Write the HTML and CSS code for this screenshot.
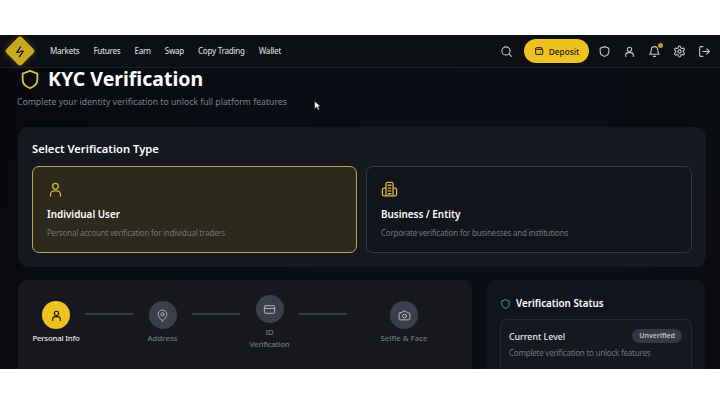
FILE: index.html
```html
<!DOCTYPE html>
<html lang="en">
<head>
<meta charset="utf-8">
<title>KYC Verification</title>
<link rel="stylesheet" href="styles.css">
</head>
<body>
<div class="frame">
  <header class="nav">
    <div class="logo"><svg class="logo-bolt" viewBox="0 0 24 24" width="13" height="13"><path d="M13 3 6 13h5M11 21l7-10h-5" fill="none" stroke="#1a1505" stroke-width="2.4" stroke-linejoin="round" stroke-linecap="round"/></svg></div>
    <nav class="links">
      <span>Markets</span><span>Futures</span><span>Earn</span><span>Swap</span><span>Copy Trading</span><span>Wallet</span>
    </nav>
    <div class="tools">
      <svg class="ic search" viewBox="0 0 24 24"><circle cx="11" cy="11" r="7.5"/><path d="m21 21-4.5-4.5"/></svg>
      <button class="deposit"><svg viewBox="0 0 24 24"><path d="M19 7V5a1 1 0 0 0-1-1H6a2 2 0 0 0 0 4h14a1 1 0 0 1 1 1v10a1 1 0 0 1-1 1H6a2 2 0 0 1-2-2V6"/><path d="M16 14h.01"/></svg>Deposit</button>
      <svg class="ic" viewBox="0 0 24 24"><path d="M12 3 4 6v6c0 5 3.500 7.800 8 9 4.500-1.200 8-4 8-9V6z"/></svg>
      <svg class="ic" viewBox="0 0 24 24"><circle cx="12" cy="8" r="4"/><path d="M5 21v-2a5 5 0 0 1 5-5h4a5 5 0 0 1 5 5v2"/></svg>
      <div class="bell"><svg class="ic" viewBox="0 0 24 24"><path d="M6 9a6 6 0 0 1 12 0c0 6 2.500 8 2.500 8h-17S6 15 6 9M10 21h4"/></svg><i class="dot"></i></div>
      <svg class="ic" viewBox="0 0 24 24"><path d="M12.220 2h-.44a2 2 0 0 0-2 2v.18a2 2 0 0 1-1 1.730l-.43.25a2 2 0 0 1-2 0l-.15-.08a2 2 0 0 0-2.730.73l-.22.38a2 2 0 0 0 .73 2.730l.15.1a2 2 0 0 1 1 1.720v.51a2 2 0 0 1-1 1.740l-.15.09a2 2 0 0 0-.73 2.730l.22.38a2 2 0 0 0 2.730.73l.15-.08a2 2 0 0 1 2 0l.43.25a2 2 0 0 1 1 1.730V20a2 2 0 0 0 2 2h.44a2 2 0 0 0 2-2v-.18a2 2 0 0 1 1-1.730l.43-.25a2 2 0 0 1 2 0l.15.08a2 2 0 0 0 2.730-.73l.22-.39a2 2 0 0 0-.73-2.730l-.15-.08a2 2 0 0 1-1-1.740v-.5a2 2 0 0 1 1-1.740l.15-.09a2 2 0 0 0 .73-2.730l-.22-.38a2 2 0 0 0-2.730-.73l-.15.08a2 2 0 0 1-2 0l-.43-.25a2 2 0 0 1-1-1.730V4a2 2 0 0 0-2-2z"/><circle cx="12" cy="12" r="3"/></svg>
      <svg class="ic" viewBox="0 0 24 24"><path d="M9 21H5a2 2 0 0 1-2-2V5a2 2 0 0 1 2-2h4M16 17l5-5-5-5M21 12H9"/></svg>
    </div>
  </header>

  <main class="page">
    <div class="title-row">
      <svg class="title-shield" viewBox="0 0 24 24"><path d="M12 2.500 4 5.500v6.500c0 5 3.500 8 8 9.500 4.500-1.500 8-4.500 8-9.500V5.500z"/></svg>
      <h1>KYC Verification</h1>
    </div>
    <p class="subtitle">Complete your identity verification to unlock full platform features</p>

    <section class="panel type-panel">
      <h2>Select Verification Type</h2>
      <div class="type-grid">
        <article class="type-card active">
          <svg class="type-ic" viewBox="0 0 24 24"><circle cx="12" cy="7.500" r="4"/><path d="M5 21v-2a5 5 0 0 1 5-5h4a5 5 0 0 1 5 5v2"/></svg>
          <h3>Individual User</h3>
          <p>Personal account verification for individual traders</p>
        </article>
        <article class="type-card">
          <svg class="type-ic" viewBox="0 0 24 24"><path d="M7 21V4a2 2 0 0 1 2-2h6a2 2 0 0 1 2 2v17zM7 10H4a2 2 0 0 0-2 2v7a2 2 0 0 0 2 2h16a2 2 0 0 0 2-2v-7a2 2 0 0 0-2-2h-3M10 6h4M10 10h4M10 14h4M10 18h4"/></svg>
          <h3>Business / Entity</h3>
          <p>Corporate verification for businesses and institutions</p>
        </article>
      </div>
    </section>

    <div class="lower">
      <section class="panel steps">
        <div class="step done">
          <div class="disc"><svg viewBox="0 0 24 24"><circle cx="12" cy="8" r="4"/><path d="M5 21v-2a5 5 0 0 1 5-5h4a5 5 0 0 1 5 5v2"/></svg></div>
          <span>Personal Info</span>
        </div>
        <i class="line"></i>
        <div class="step">
          <div class="disc"><svg viewBox="0 0 24 24"><path d="M12 22s8-6.500 8-12a8 8 0 0 0-16 0c0 5.500 8 12 8 12z"/><circle cx="12" cy="10" r="3"/></svg></div>
          <span>Address</span>
        </div>
        <i class="line"></i>
        <div class="step raised">
          <div class="disc"><svg viewBox="0 0 24 24"><rect x="2.500" y="5" width="19" height="14" rx="2"/><path d="M2.500 10h19"/></svg></div>
          <span>ID<br>Verification</span>
        </div>
        <i class="line"></i>
        <div class="step last">
          <div class="disc"><svg viewBox="0 0 24 24"><path d="M4 7h3l2-3h6l2 3h3a2 2 0 0 1 2 2v9a2 2 0 0 1-2 2H4a2 2 0 0 1-2-2V9a2 2 0 0 1 2-2z"/><circle cx="12" cy="13" r="3.500"/></svg></div>
          <span>Selfie &amp; Face</span>
        </div>
      </section>

      <section class="panel status">
        <div class="status-head">
          <svg viewBox="0 0 24 24"><path d="M12 2.500 4 5.500v6.500c0 5 3.500 8 8 9.500 4.500-1.500 8-4.500 8-9.500V5.500z"/></svg>
          <h2>Verification Status</h2>
        </div>
        <div class="level">
          <div class="level-top"><strong>Current Level</strong><em>Unverified</em></div>
          <p>Complete verification to unlock features</p>
        </div>
      </section>
    </div>

    <svg class="cursor" viewBox="0 0 12 16"><path d="M1 1v11l3-2.500 2 4.500 2-1-2-4.300h4z" fill="#fff" stroke="#111" stroke-width=".7"/></svg>
  </main>
</div>
</body>
</html>
```

FILE: styles.css
```css
* { box-sizing: border-box; }
html, body { margin: 0; padding: 0; background: #fff; }
body { width: 720px; height: 404px; overflow: hidden; padding-top: 35px; font-family: "Noto Sans", "Liberation Sans", sans-serif; }
h1, h2, h3, p { margin: 0; }

.frame { position: relative; width: 720px; height: 334px; overflow: hidden; background: linear-gradient(100deg, #07090f 0%, #0b0e15 60%, #0a0c12 100%); color: #fff; }

.nav { height: 33px; display: flex; align-items: center; padding-left: 9px; background: #0c0f14; border-bottom: 1px solid #1a1c20; }
.logo { width: 22px; height: 22px; flex: none; margin-right: 19px; border-radius: 3px; background: #c9a81e; transform: rotate(45deg); display: flex; align-items: center; justify-content: center; box-shadow: 0 0 7px rgba(201,168,30,.3); }
.logo-bolt { transform: rotate(-45deg); }
.links { display: flex; gap: 14px; margin-top: -2px; font-size: 8px; letter-spacing: -.28px; font-weight: 500; color: #d4d6d9; }
.tools { margin-left: auto; display: flex; align-items: center; padding-right: 9px; }
.ic { width: 13px; height: 13px; fill: none; stroke: #c3c6ca; stroke-width: 2; stroke-linecap: round; stroke-linejoin: round; display: block; }
.tools > .ic, .bell { margin-left: 12px; }
.tools > .search { margin: 0 11px 0 0; }
.deposit { width: 65px; height: 24px; padding: 0; border: 0; border-radius: 12px; background: #eec31f; color: #1b1706; font: 500 8.300px "Noto Sans", "Liberation Sans", sans-serif; display: flex; align-items: center; justify-content: center; gap: 5px; }
.deposit svg { width: 10px; height: 10px; fill: none; stroke: #1b1706; stroke-width: 2.400; stroke-linecap: round; stroke-linejoin: round; }
.tools > .deposit + .ic { margin-left: 9px; }
.bell { position: relative; }
.dot { position: absolute; top: -2px; right: -2px; width: 5px; height: 5px; border-radius: 50%; background: #c79a2a; }

.page { position: relative; padding: 0 14px 0 18px; }
.title-row { display: flex; align-items: center; gap: 7px; height: 22px; margin: 0 0 0 1px; }
.title-shield { width: 22px; height: 25px; flex: none; fill: none; stroke: #d9bb45; stroke-width: 2; stroke-linejoin: round; }
h1 { font-size: 19.500px; line-height: 22px; font-weight: 700; }
.subtitle { margin-top: 6px; margin-left: -1px; font-size: 8.700px; line-height: 12px; color: #7f838a; }

.panel { background: #16181f; border-radius: 10px; }
.type-panel { height: 140px; margin-top: 19px; padding: 14px 14px 0; }
.type-panel h2 { font-size: 11.200px; line-height: 16px; font-weight: 600; }
.type-grid { display: grid; grid-template-columns: 325px 326px; gap: 9px; margin-top: 9px; }
.type-card { height: 87px; padding: 14px 14px 0; border: 1px solid #2f3a3c; border-radius: 7px; background: #11141b; }
.type-card.active { border: 1.500px solid #bfa54c; background: #2d291c; }
.type-ic { width: 17px; height: 17px; display: block; fill: none; stroke: #d9b947; stroke-width: 1.800; stroke-linecap: round; stroke-linejoin: round; }
.type-card h3 { margin-top: 10px; font-size: 9.900px; line-height: 13px; font-weight: 600; }
.type-card p { margin-top: 7px; font-size: 8px; letter-spacing: -.22px; line-height: 10px; color: #72757b; }

.lower { display: flex; gap: 14px; margin-top: 13px; }
.steps { width: 454px; height: 120px; display: flex; align-items: flex-start; padding: 21px 0 0 14px; background: #16181e; }
.step { width: 59px; flex: none; display: flex; flex-direction: column; align-items: center; text-align: center; font-size: 7.800px; line-height: 11.500px; font-weight: 500; color: #74787f; }
.step span { margin-top: 4px; white-space: nowrap; }
.step.done { color: #e6e6e6; width: 48px; margin-right: 5px; letter-spacing: -.2px; }
.step.raised { margin-top: -6px; letter-spacing: -.2px; }
.step.last { width: 114px; }
.disc { width: 28px; height: 28px; border-radius: 50%; background: #3a404b; display: flex; align-items: center; justify-content: center; }
.disc svg { width: 13px; height: 13px; fill: none; stroke: #b5b9c0; stroke-width: 1.800; stroke-linecap: round; stroke-linejoin: round; }
.done .disc { background: #eec31f; }
.done .disc svg { stroke: #1b1706; stroke-width: 2; }
.line { width: 48px; height: 2px; margin: 12px 0 0 0; flex: none; background: #383c44; }

.status { flex: 1; padding: 17px 14px 0; background: #12141b; }
.status-head { display: flex; align-items: center; gap: 5px; }
.status-head svg { width: 11px; height: 12px; fill: none; stroke: #5aa892; stroke-width: 2; stroke-linejoin: round; }
.status-head h2 { font-size: 9.800px; line-height: 14px; font-weight: 600; }
.level { margin-top: 8px; height: 60px; padding: 9px 9px 9px 8px; border: 1px solid #24282f; border-radius: 7px; background: #14181f; }
.level-top { display: flex; align-items: center; justify-content: space-between; }
.level strong { margin-top: 2px; font-size: 8.800px; font-weight: 500; color: #e8e8e8; }
.level em { padding: 2px 7px; border-radius: 7px; background: #343844; font-size: 7px; line-height: 10px; font-style: normal; font-weight: 600; color: #c2c4c9; }
.level p { margin-top: 5px; font-size: 8px; letter-spacing: -.22px; line-height: 10px; color: #72757b; }

.cursor { position: absolute; left: 314px; top: 32px; width: 8px; height: 12px; }
```
